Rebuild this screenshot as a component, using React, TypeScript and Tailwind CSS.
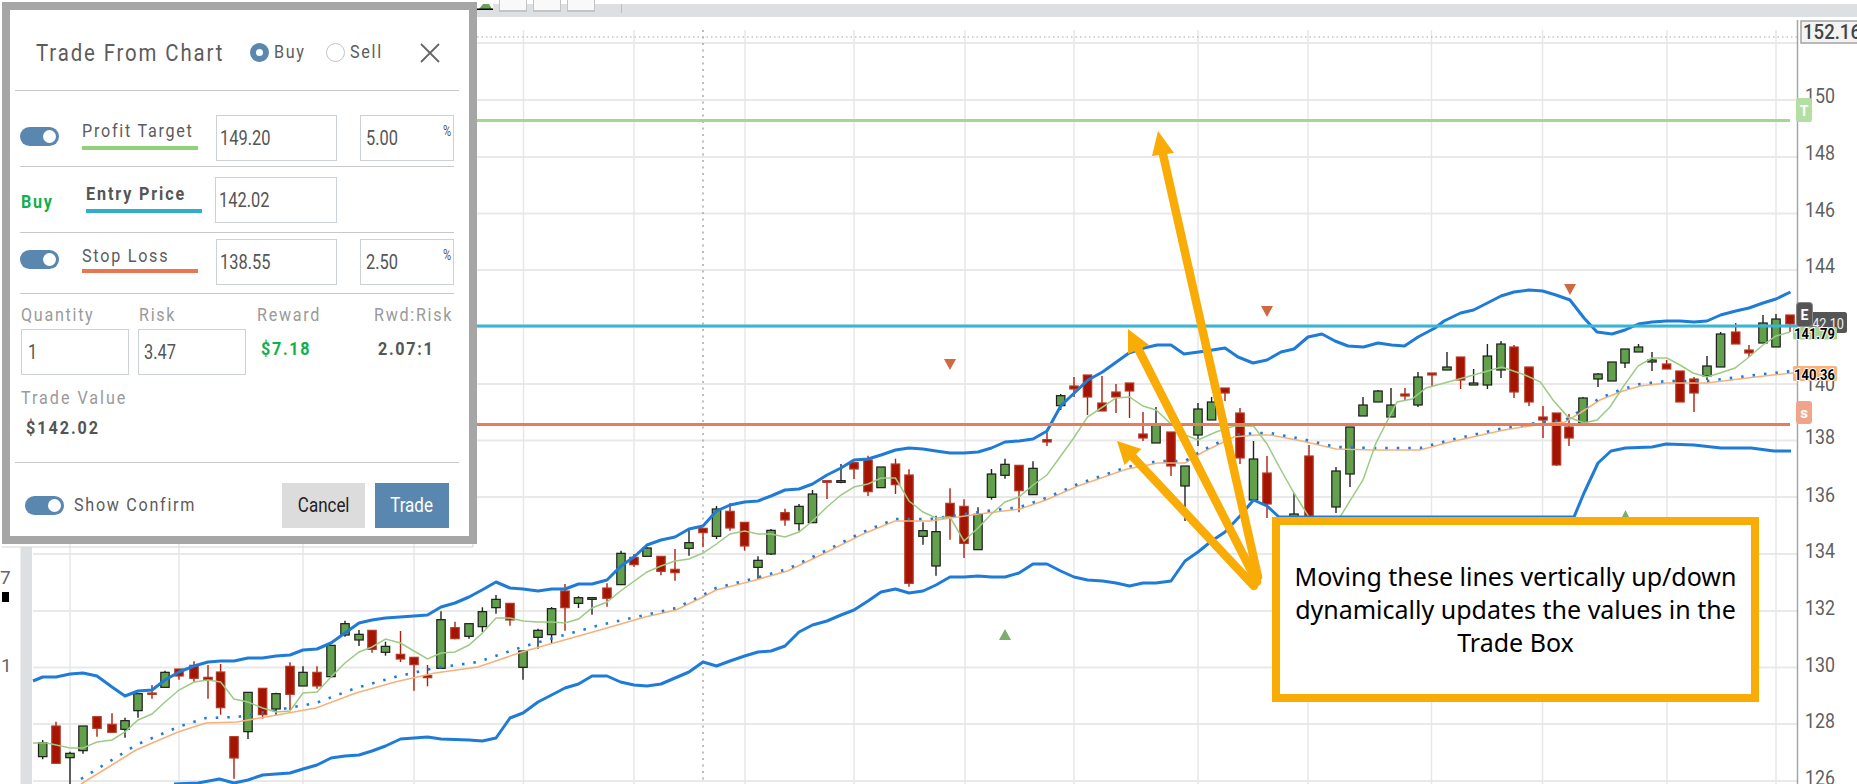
import type { ReactNode } from 'react'

const roboto = '[font-family:Roboto,sans-serif]'

type Candle = [number, number, number, number, number, 'g' | 'r']

// body top, body bottom, wick top, wick bottom read off the crops, oy + v / 3
const crop = (oy: number, rows: Candle[]): Candle[] =>
  rows.map(([x, a, b, c, d, k]) => [x, oy + a / 3, oy + b / 3, oy + c / 3, oy + d / 3, k])

const candles: Candle[] = [
  ...crop(540, [
    [42.7, 608, 650, 600, 658, 'g'], [56, 558, 670, 545, 670, 'r'], [70, 640, 653, 635, 735, 'g'],
    [83, 558, 632, 558, 641, 'g'], [97, 530, 565, 530, 590, 'r'], [112, 553, 577, 520, 577, 'r'],
    [125, 542, 568, 533, 593, 'g'], [138, 461, 512, 461, 533, 'g'], [152, 459, 463, 435, 476, 'r'],
    [165, 397, 442, 392, 442, 'g'], [179, 387, 408, 387, 419, 'r'], [194, 376, 415, 364, 426, 'r'],
    [208, 412, 420, 375, 476, 'r'], [220.6, 396, 503, 372, 524, 'r'], [234, 590, 654, 590, 716, 'r'],
    [248, 457, 575, 457, 597, 'g'], [262.6, 445, 524, 445, 536, 'r'], [276, 461, 507, 458, 526, 'g'],
    [290, 379, 463, 367, 510, 'r'], [303, 397, 438, 379, 438, 'g'], [317, 397, 438, 379, 446, 'r'],
    [331, 316, 410, 316, 414, 'g'], [345, 251, 285, 242, 290, 'g'], [359, 283, 300, 270, 318, 'g'],
    [372, 271, 328, 271, 338, 'r'], [385.5, 319, 337, 305, 347, 'g'], [400.5, 343, 357, 273, 366, 'r'],
    [414, 352, 374, 352, 452, 'r'], [427.5, 407, 413, 375, 439, 'r'], [441, 239, 385, 214, 385, 'g'],
    [455, 263, 296, 245, 298, 'r'], [469, 251, 289, 251, 296, 'g'], [482.4, 215, 260, 202, 276, 'g'],
    [496, 178, 203, 165, 221, 'g'], [510, 190, 240, 190, 257, 'r'], [523, 333, 382, 333, 419, 'g'],
    [538, 271, 292, 266, 326, 'g'], [551.6, 206, 284, 201, 310, 'g'], [565, 153, 203, 132, 272, 'r'],
    [578.5, 173, 190, 169, 204, 'g'], [592, 173, 178, 173, 224, 'g'],
  ]),
  ...crop(384, [
    [607, 612, 643, 598, 668, 'r'], [621, 508, 602, 500, 602, 'g'], [634, 520, 542, 510, 548, 'r'],
    [647, 492, 517, 490, 517, 'g'], [661, 517, 562, 517, 574, 'r'], [675, 556, 566, 495, 590, 'r'],
    [689, 476, 493, 435, 515, 'g'], [703, 433, 446, 433, 490, 'r'], [716.5, 375, 457, 366, 465, 'g'],
    [730, 382, 432, 358, 440, 'r'], [744.6, 415, 486, 415, 500, 'r'], [758, 529, 550, 517, 585, 'g'],
    [771, 439, 510, 435, 513, 'g'], [785, 386, 408, 374, 425, 'r'], [799, 367, 419, 360, 440, 'g'],
    [812.5, 330, 416, 318, 416, 'g'], [827, 290, 295, 290, 345, 'r'], [841, 290, 295, 240, 298, 'g'],
    [854, 236, 255, 236, 285, 'r'], [868, 228, 323, 215, 336, 'r'], [881, 249, 311, 249, 312, 'g'],
    [895.5, 240, 302, 224, 330, 'r'], [909, 273, 598, 256, 608, 'r'], [923, 440, 457, 415, 482, 'g'],
    [936, 443, 546, 395, 575, 'g'], [950, 358, 397, 313, 467, 'r'], [964, 367, 478, 346, 522, 'r'],
    [978, 391, 497, 370, 497, 'g'], [991.5, 270, 340, 255, 347, 'g'], [1005, 241, 274, 224, 284, 'g'],
    [1019, 244, 320, 244, 385, 'r'], [1033, 253, 332, 232, 332, 'g'], [1047, 167, 174, 145, 186, 'r'],
    [1060.7, 35, 65, 30, 78, 'g'],
  ]),
  [1074, 386, 389, 377, 397, 'r'], [1087.5, 375, 397, 375, 415, 'r'], [1102, 403, 411, 376, 411, 'r'],
  [1116, 392, 397, 384, 413, 'r'], [1129.5, 383, 391, 383, 418, 'r'], [1143, 434, 438, 412, 441, 'r'],
  [1156, 424, 443, 407, 443, 'g'], [1171, 432, 466, 432, 476, 'r'], [1185, 466, 486, 466, 521, 'g'],
  [1198, 409, 435, 403, 446, 'g'], [1211.6, 402, 420, 397, 420, 'g'], [1225, 388, 393, 388, 401, 'r'],
  [1240, 413, 458, 408, 464, 'r'], [1253.5, 459, 500, 441, 500, 'g'], [1267, 473, 504, 456, 518, 'r'],
  [1294, 514, 530, 493, 530, 'g'], [1309, 456, 517, 445, 530, 'r'], [1336, 471, 507, 467, 513, 'g'],
  [1350, 427, 474, 427, 487, 'g'], [1363, 405, 416, 397, 416, 'g'], [1378, 391, 402, 390, 402, 'g'],
  [1391, 405, 417, 388, 417, 'g'], [1405, 394, 396, 388, 400, 'r'], [1418, 377, 405, 372, 407, 'g'],
  [1432, 373, 375, 373, 387, 'r'], [1447, 367, 370, 352, 370, 'g'], [1460.6, 357, 380, 357, 389, 'r'],
  [1473.6, 383, 385, 369, 385, 'g'], [1487.4, 356, 385, 344, 389, 'g'], [1501, 344, 370, 341, 378, 'g'],
  [1514, 347, 392, 345, 398, 'r'], [1529, 367, 402, 367, 406, 'r'], [1543, 417, 420, 406, 438, 'r'],
  [1556.5, 413, 465, 413, 466, 'r'], [1569, 427, 438, 414, 446, 'r'], [1583, 398, 423, 397, 423, 'g'],
  [1598, 374, 379, 373, 387, 'g'], [1612, 362, 381, 362, 381, 'g'], [1625, 349, 363, 349, 368, 'g'],
  [1638.5, 347, 352, 344, 352, 'g'], [1652, 360, 362, 352, 371, 'g'], [1666.6, 364, 369, 360, 369, 'r'],
  [1680, 371, 402, 371, 402, 'r'], [1694, 379, 393, 377, 412, 'r'], [1707, 366, 376, 356, 380, 'g'],
  [1720.6, 334, 367, 332, 367, 'g'], [1735.7, 332, 344, 323, 344, 'r'], [1749, 350, 353, 345, 357, 'r'],
  [1763, 323, 343, 315, 343, 'g'], [1776, 319, 347, 314, 347, 'g'], [1790, 315, 324, 315, 332, 'r'],
]

const upperBand = '33,681 42.7,677 56,677 70,674 83,673 97,676 112,687 125,696 138,691 152,690 165,680 179,672 194,666 208,662 220.6,661 234,661 248,658 262.6,658 276,656 290,655 303,650 317,649 331,643 345,633 359,623 372,620 385.5,618 400,617 414,616 427.5,615 441,607 455,603 469,597 482,590 496,582 510,588 523,589 538,591 551.6,589 565,589 578.5,584 592,584 607,580 621,566 634,557 647,545 661,540 675,537 689,529 703,526 716.5,511 730,505 744.6,502 758,501 771,496 785,490 799,489 812.5,484 827,475 841,468 854,460 868,459 881,455 895.5,450 909,448 923,449 936,451 950,453 964,453 978,452 991.5,448 1005,442 1019,441 1033,439 1047,431 1060.7,406 1069,398 1088,380 1102.5,372 1115,363 1129,353 1144,348 1157,345 1171,345 1184,354 1206,351 1225,348 1238,357 1253,363 1267,360 1281,352 1294,349 1308,337 1322,334 1335,341 1348,346 1363.5,347 1378,343 1391.6,345 1404.5,346 1418,337 1435,328 1444,321 1460.6,313 1473.6,310 1487.4,303 1501,296 1514,292 1529,290 1542.7,291 1556,295 1570,300 1584,318 1597,332 1612,334 1625,330 1638.5,324 1652,322 1666.6,321 1680,321 1694,322 1707,321 1720.6,315 1735.7,311 1749,308 1763,303 1776,299 1790.5,292'

const lowerBand = '174,784 198,783 219.5,779 234,783 248,780 262.6,775 276,774 290,773 303,769 317,765 331,758 345,756 359,755 372,751 385.5,746 400.5,739 414,738 427.5,737 441,739 469,740 482.4,741 496,738 510,718 523,713 538,702 551.6,695 565,688 578.5,684 592,676 607,676 620.5,682 634,685 647,686 661,684 675,678 689,672 703,662 716.5,666 730,661 744.6,656 758,652 771,651 785,646 799,632 812.5,625 827,621 841,615 854,610 868,601 881,592 895.5,589 909,593 923,591 936,585 950,577 964,577 978,576 991.5,577 1005,577 1019,573 1033,564 1047,564 1060.7,571 1074,577 1087.5,580 1102.7,581 1116,583 1129.5,586 1143,583 1156,583 1171,581 1185,561 1198,552 1211.6,541 1225,532 1240,516 1253.5,500 1267,506 1279,517 1574,517 1584,493 1598,463 1611,451 1625.5,448 1652,447 1666,444 1694,445 1721,448 1751,448 1774,451 1791,451'

const slowMa = '81,784 107,768 136,750 178,732 206,723 237,722 277,715 316,708 356,693 395,682 435,673 478,667 522,652 553.6,643 600,630 645,617 676,610 703,597 716,590 752,581 787.5,571 823,554 863,534 895,521 930,521 979,514 1020,509 1046,500 1078,486 1127,469 1158,463 1185,463 1203,452 1234,437 1256,435 1270,435 1302,441 1336,449 1374,450 1420,450 1450,442 1504,430 1542,424 1565,422 1580,413 1600,400 1620,392 1640,386 1667,383 1707,383 1747,378 1773,375 1793,373'

const slowDots = slowMa
  .split(' ')
  .map((p) => {
    const [x, y] = p.split(',').map(Number)
    return `${x},${y - (x < 620 ? 5 : 2)}`
  })
  .join(' ')

const fastMa = '33,743 47,743 70,748 83,748 97,742 112,740 125,732 138,720 152,714 165,702 179,690 194,682 208,680 220.6,682 234,699 248,702 262.6,708 276,712 290,711 303,693 317,692 331,677 345,663 359,652 372,647 385.5,639 400.5,643 414,651 427.5,659 441,653 455,652 469,645 482.4,633 496,618 510,618 523,621 538,622 551.6,622 565,623 578.5,619 592,608 607,602 620.5,591 647,572 661,566 675,561 689,559 703,553 716.5,544 730,534 744.6,531 758,534 771,534 785,537 799,532 812.5,521 827,507 841,495 854,487 868,484 881,478 895.5,478 909,501 923,512 936,518 950,517 964,541 978,528 991.5,514 1005,502 1019,497 1033,485 1047,475 1073,439 1087.5,417 1102.7,407 1116,398 1129.5,397 1143,406 1156,410 1171,424 1185,435 1198,440 1216,432 1234,426 1253.5,426 1267,444 1281,470 1294,493 1309,517 1340,517 1363,480 1376,443 1397,402 1412,399 1426,388 1448,382 1473.6,375 1501.7,367 1525,375 1540.5,382 1553,400 1568,417 1584,423 1597,420 1610,407 1623,387 1638,366 1652,358 1667,358 1680,365 1693,373 1707,377 1720,373 1735,368 1749,357 1763,345 1776,336 1790,332'

const hGrid = [43, 100, 157, 213.5, 270, 327, 384, 440.5, 497, 554, 611, 667.5, 724, 781]
const vGrid = [70, 179, 303, 414, 523.5, 634, 745, 854, 965, 1074, 1198, 1308, 1431.5, 1542.5, 1667, 1776]

const axisLabels: [string, number][] = [
  ['150', 96], ['148', 153], ['146', 210], ['144', 266], ['140', 384], ['138', 437],
  ['136', 495], ['134', 551], ['132', 608], ['130', 665], ['128', 721], ['126', 778],
]

function Arrow({ tail, tip, a, b }: { tail: string; tip: string; a: string; b: string }) {
  const [tx, ty] = tip.split(',').map(Number)
  const [ax, ay] = a.split(',').map(Number)
  const [bx, by] = b.split(',').map(Number)
  return (
    <g>
      <line
        x1={(ax + bx) / 2 * 0.9 + tx * 0.1}
        y1={(ay + by) / 2 * 0.9 + ty * 0.1}
        x2={tail.split(',')[0]}
        y2={tail.split(',')[1]}
        stroke="#f9ab06"
        strokeWidth="8.5"
        strokeLinecap="round"
      />
      <polygon points={`${tip} ${a} ${b}`} fill="#f9ab06" />
    </g>
  )
}

function Chart() {
  return (
    <svg viewBox="0 17 1857 767" className="block h-[767px] w-[1857px]">
      {hGrid.map((y) => (
        <line key={y} x1="33" x2="1797" y1={y} y2={y} stroke="#e9e9e9" strokeWidth="1.8" />
      ))}
      {vGrid.map((x) => (
        <line key={x} x1={x} x2={x} y1="30" y2="784" stroke="#e6e6e6" strokeWidth="1.4" />
      ))}
      <line x1="477" x2="1797" y1="37" y2="37" stroke="#a8a8a8" strokeWidth="1.2" strokeDasharray="1.5 3" />
      <line x1="703" x2="703" y1="30" y2="784" stroke="#a8a8a8" strokeWidth="1.5" strokeDasharray="2 4.5" />

      <rect x="20.5" y="547" width="11.5" height="237" fill="#dde0e3" />
      <line x1="2" x2="473" y1="547" y2="547" stroke="#d5d5d5" />
      <line x1="473" x2="473" y1="540" y2="547" stroke="#d5d5d5" />
      <text x="0" y="584" className={roboto} fontSize="19" fill="#666">7</text>
      <rect x="2" y="592" width="7" height="10" fill="#000" />
      <text x="1" y="672" className={roboto} fontSize="19" fill="#666">1</text>

      {candles.map(([x, top, bottom, wickTop, wickBottom, kind]) => (
        <g key={x}>
          <line
            x1={x}
            x2={x}
            y1={wickTop}
            y2={wickBottom}
            stroke={kind === 'g' ? '#222' : '#ad1f0c'}
            strokeWidth="1.4"
          />
          <rect
            x={x - 4.2}
            y={top}
            width="8.4"
            height={bottom - top}
            fill={kind === 'g' ? '#62a04c' : '#a51400'}
            stroke={kind === 'g' ? '#1c1c1c' : '#b23a28'}
            strokeWidth="1.2"
          />
        </g>
      ))}

      <polyline points={slowMa} fill="none" stroke="#f6b27c" strokeWidth="1.6" />
      <polyline points={slowDots} fill="none" stroke="#1f7bd8" strokeWidth="2.6" strokeDasharray="2.5 9" />
      <polyline points={fastMa} fill="none" stroke="#9ccc84" strokeWidth="1.5" />
      <polyline points={upperBand} fill="none" stroke="#1f7bd8" strokeWidth="3" strokeLinejoin="round" />
      <polyline points={lowerBand} fill="none" stroke="#1f7bd8" strokeWidth="3" strokeLinejoin="round" />

      <polygon points="944,359 956,359 950,370" fill="#cd6a43" />
      <polygon points="1261,306 1273,306 1267,317" fill="#cd6a43" />
      <polygon points="1564,284 1576,284 1570,295" fill="#cd6a43" />
      <polygon points="999,640 1011,640 1005,629" fill="#7bad6b" />
      <polygon points="1620,521 1631,521 1625.5,510" fill="#7bad6b" />

      <line x1="477" x2="1790" y1="120.5" y2="120.5" stroke="#a3d98c" strokeWidth="3" />
      <line x1="477" x2="1800" y1="326" y2="326" stroke="#3ab5d4" strokeWidth="3" />
      <line x1="477" x2="1790" y1="424.5" y2="424.5" stroke="#e97c5a" strokeWidth="3" />

      <line x1="1797.5" x2="1797.5" y1="20" y2="784" stroke="#a6a6a6" strokeWidth="1.5" />

      {axisLabels.map(([label, y]) => (
        <text
          key={label}
          x="1805"
          y={y + 7}
          textLength="30"
          lengthAdjust="spacingAndGlyphs"
          className={roboto}
          fontSize="20"
          fill="#5f5f5f"
        >
          {label}
        </text>
      ))}

      <rect x="1801" y="21" width="60" height="22" fill="#f3f3f3" stroke="#a8a8a8" strokeWidth="1.6" />
      <text
        x="1803"
        y="39"
        textLength="58"
        lengthAdjust="spacingAndGlyphs"
        className={roboto}
        fontSize="20"
        fontWeight="500"
        fill="#444"
      >
        152.16
      </text>

      <rect x="1796" y="98" width="16" height="24" rx="2.5" fill="#b3dfa5" />
      <text x="1804" y="116" textAnchor="middle" className={roboto} fontSize="14" fontWeight="700" fill="#fff">T</text>

      <rect x="1806" y="312" width="41" height="21" rx="2.5" fill="#555" />
      <text
        x="1805"
        y="329"
        textLength="39"
        lengthAdjust="spacingAndGlyphs"
        className={roboto}
        fontSize="15"
        fill="#eee"
      >
        142.10
      </text>
      <rect x="1796.5" y="302.5" width="16" height="24" rx="3" fill="#555" stroke="#888" />
      <text x="1804.5" y="320" textAnchor="middle" className={roboto} fontSize="14" fontWeight="700" fill="#fff">E</text>

      <rect x="1793" y="327" width="44" height="12.5" rx="1.5" fill="#a5d28f" />
      <text
        x="1794"
        y="338.5"
        textLength="41"
        lengthAdjust="spacingAndGlyphs"
        className={`${roboto} [paint-order:stroke]`}
        fontSize="15.5"
        fontWeight="700"
        stroke="#fff"
        strokeWidth="2"
        fill="#000"
      >
        141.79
      </text>

      <rect x="1793" y="366" width="44" height="15" rx="1.5" fill="#f8b27b" />
      <text
        x="1794"
        y="380"
        textLength="41"
        lengthAdjust="spacingAndGlyphs"
        className={`${roboto} [paint-order:stroke]`}
        fontSize="15.5"
        fontWeight="700"
        stroke="#fff"
        strokeWidth="2"
        fill="#000"
      >
        140.36
      </text>

      <rect x="1796" y="401" width="16" height="23" rx="3" fill="#f0a58a" />
      <text x="1804" y="418" textAnchor="middle" className={roboto} fontSize="15" fontWeight="700" fill="#fff">s</text>

      <Arrow tail="1258,577" tip="1158,131" a="1152,156" b="1174,153" />
      <Arrow tail="1257,582" tip="1128,329" a="1128,354" b="1149,345" />
      <Arrow tail="1254,586" tip="1117,441" a="1124.5,465" b="1141.5,449" />
    </svg>
  )
}

// the box text is a tall narrow face, closest is Roboto pulled in horizontally
function Narrow({ children }: { children: ReactNode }) {
  return <span className="inline-block origin-left scale-x-[.85] whitespace-nowrap">{children}</span>
}

function Toggle() {
  return (
    <div className="flex h-[19px] w-[39px] shrink-0 items-center justify-end rounded-full bg-[#5a87b0] pr-[3px]">
      <div className="h-[13px] w-[13px] rounded-full bg-white" />
    </div>
  )
}

function Field({ value, percent, className }: { value: string; percent?: boolean; className: string }) {
  return (
    <div
      className={`relative flex h-[46px] shrink-0 items-center border-[1.5px] border-[#cdd1d8] text-[20px] text-[#555] ${className}`}
    >
      <span className="inline-block origin-left scale-x-[.82]">{value}</span>
      {percent && <span className="absolute right-[1px] top-[8px] text-[14px] leading-[14px] scale-x-[.8]">%</span>}
    </div>
  )
}

function TradeBox() {
  return (
    <div
      className={`absolute left-[2px] top-[2px] h-[542px] w-[475px] border-8 border-[#a6a6a6] bg-white ${roboto}`}
    >
      <div className="ml-[5px] mr-[10px] flex h-[81px] items-center border-b-[1.5px] border-[#c9c9c9] pt-[5px] text-[#5c5c5c]">
        <span className="ml-[21px] w-[214px] text-[24px] tracking-[2.2px]">
          <Narrow>Trade From Chart</Narrow>
        </span>
        <div className="h-[19px] w-[19px] rounded-full border-[6px] border-[#5a87b0]" />
        <span className="ml-[5px] w-[52px] text-[19px] tracking-[2px]">
          <Narrow>Buy</Narrow>
        </span>
        <div className="h-[19px] w-[19px] rounded-full border border-[#c4c4c4]" />
        <span className="ml-[5px] w-[70px] text-[19px] tracking-[2px]">
          <Narrow>Sell</Narrow>
        </span>
        <svg viewBox="0 0 20 20" className="h-[20px] w-[20px]">
          <path d="M1 1 L19 19 M19 1 L1 19" stroke="#666" strokeWidth="1.8" fill="none" />
        </svg>
      </div>

      <div className="ml-[10px] w-[434px]">
        <div className="flex h-[76px] items-start border-b-[1.5px] border-[#c9c9c9]">
          <div className="mt-[36px]">
            <Toggle />
          </div>
          <div className="ml-[23px] mt-[31px] w-[116px] border-b-4 border-[#92d07a] pb-[6px] text-[19px] leading-[18px] tracking-[2.05px] text-[#5c5c5c]">
            <Narrow>Profit Target</Narrow>
          </div>
          <Field value="149.20" className="ml-[18px] mt-[24px] w-[121px] pl-[3px]" />
          <Field value="5.00" percent className="ml-[23px] mt-[24px] w-[94px] pl-[5px]" />
        </div>

        <div className="flex h-[66px] items-start border-b-[1.5px] border-[#c9c9c9]">
          <div className="mt-[25px] w-[66px] pl-px text-[19px] font-bold leading-[20px] tracking-[2px] text-[#0fb04d]">
            <Narrow>Buy</Narrow>
          </div>
          <div className="mt-[17px] w-[116px] border-b-4 border-[#2eaec9] pb-[5px] text-[19px] font-bold leading-[20px] tracking-[2.2px] text-[#555]">
            <Narrow>Entry Price</Narrow>
          </div>
          <Field value="142.02" className="ml-[13px] mt-[10px] w-[122px] pl-[3px]" />
        </div>

        <div className="flex h-[61px] items-start border-b-[1.5px] border-[#c9c9c9]">
          <div className="mt-[17px]">
            <Toggle />
          </div>
          <div className="ml-[23px] mt-[14px] w-[116px] border-b-4 border-[#e8774f] pb-[4px] text-[19px] leading-[18px] tracking-[2.05px] text-[#5c5c5c]">
            <Narrow>Stop Loss</Narrow>
          </div>
          <Field value="138.55" className="ml-[18px] mt-[6px] w-[121px] pl-[3px]" />
          <Field value="2.50" percent className="ml-[23px] mt-[6px] w-[94px] pl-[5px]" />
        </div>

        <div className="flex pt-[11px] text-[19px] leading-[20px] tracking-[2px] text-[#9a9a9a]">
          <div className="w-[118px] shrink-0 pl-[1px]">
            <Narrow>Quantity</Narrow>
            <Field value="1" className="mt-[4px] w-[108px] pl-[6px] tracking-normal" />
          </div>
          <div className="w-[118px] shrink-0 pl-[1px]">
            <Narrow>Risk</Narrow>
            <Field value="3.47" className="-ml-[1px] mt-[4px] w-[108px] pl-[5px] tracking-normal" />
          </div>
          <div className="w-[118px] shrink-0 pl-[1px]">
            <Narrow>Reward</Narrow>
            <div className="ml-[4px] mt-[14px] font-bold text-[#0fb04d]">
              <Narrow>$7.18</Narrow>
            </div>
          </div>
          <div className="shrink-0 whitespace-nowrap">
            <Narrow>Rwd:Risk</Narrow>
            <div className="ml-[4px] mt-[14px] font-bold text-[#555]">
              <Narrow>2.07:1</Narrow>
            </div>
          </div>
        </div>

        <div className="pl-[1px] pt-[13px] text-[19px] leading-[20px] tracking-[2.3px] text-[#9a9a9a]">
          <Narrow>Trade Value</Narrow>
          <div className="ml-[5px] mt-[10px] font-bold text-[#555]">
            <Narrow>$142.02</Narrow>
          </div>
        </div>
      </div>

      <div className="ml-[5px] mr-[10px] mt-[24px] flex h-[74px] items-center border-t-[1.5px] border-[#c9c9c9] pl-[10px] pt-[12px]">
        <Toggle />
        <span className="ml-[10px] w-[208px] text-[19px] tracking-[2px] text-[#5c5c5c]">
          <Narrow>Show Confirm</Narrow>
        </span>
        <button className="h-[45px] w-[83px] bg-[#dcdcdc] text-[19.5px] text-[#222]">
          <span className="inline-block scale-x-[.87]">Cancel</span>
        </button>
        <button className="ml-[10px] h-[45px] w-[74px] bg-[#5a87b0] text-[19.5px] text-white">
          <span className="inline-block scale-x-[.87]">Trade</span>
        </button>
      </div>
    </div>
  )
}

function Toolbar() {
  return (
    <div className="relative ml-[477px] mt-[4px] flex h-[13px] items-start bg-[#dde0e3] pl-[22px]">
      {/* bit of the chart-type icon that sticks out beside the box */}
      <svg viewBox="0 0 16 6" className="absolute left-0 top-0 h-[6px] w-[16px]">
        <rect width="16" height="6" fill="#fff" />
        <path d="M2 5 L6 0 L12 0 L15 5 Z" fill="#6aa450" />
        <rect y="4.5" width="16" height="1.5" fill="#000" />
      </svg>
      <div className="-mt-[4px] h-[12px] w-[28px] border border-t-0 border-b-2 border-[#c4c4c4] bg-[#f9f9f9]" />
      <div className="-mt-[4px] ml-[6px] h-[12px] w-[28px] border border-t-0 border-b-2 border-[#c4c4c4] bg-[#f9f9f9]" />
      <div className="-mt-[4px] ml-[6px] h-[12px] w-[28px] border border-t-0 border-b-2 border-[#c4c4c4] bg-[#f9f9f9]" />
      <div className="ml-[26px] h-[9px] w-px bg-[#bdbdbd]" />
    </div>
  )
}

export default function App() {
  return (
    <div className="relative h-[784px] w-[1857px] overflow-hidden bg-white">
      <Toolbar />
      <Chart />
      <TradeBox />
      <div className="absolute left-[1272px] top-[517px] flex h-[185px] w-[487px] items-center justify-center border-8 border-[#f9ab06] bg-white text-center text-[25px] leading-[33px] text-black [font-family:'Noto_Sans',sans-serif]">
        <p>
          Moving these lines vertically up/down
          <br />
          dynamically updates the values in the
          <br />
          Trade Box
        </p>
      </div>
    </div>
  )
}
